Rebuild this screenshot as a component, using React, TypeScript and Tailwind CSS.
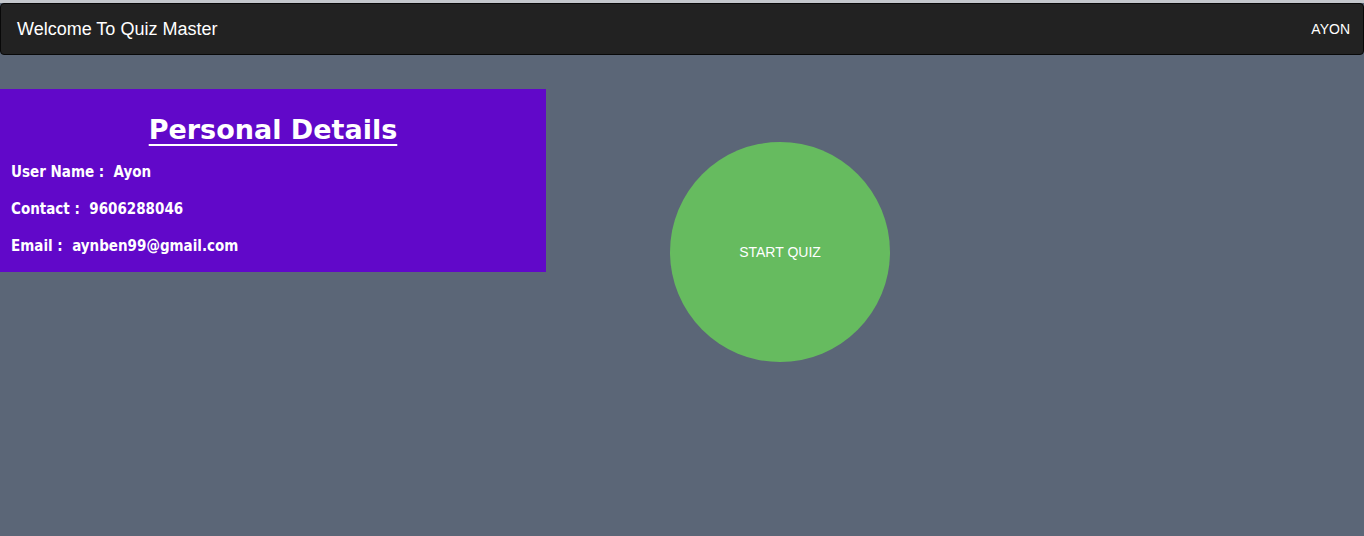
export default function App() {
  const details = [
    { label: 'User Name', value: 'Ayon' },
    { label: 'Contact', value: '9606288046' },
    { label: 'Email', value: 'aynben99@gmail.com' }
  ];

  return (
    <div className="h-[536px] w-full overflow-hidden bg-[#5b6677]">
      <div className="h-[3px] bg-[#c4c7cc]" />
      <nav className="flex h-[52px] items-center justify-between rounded-[4px] border border-[#080808] bg-[#222222] pl-4 pr-[13px] font-['Liberation_Sans',Arial,sans-serif] text-white">
        <span className="text-[18px]">Welcome To Quiz Master</span>
        <span className="text-[14px]">AYON</span>
      </nav>

      <main className="mt-[34px] flex items-start">
        <section className="h-[183px] w-[546px] bg-[#6108c9] px-[11px] pt-[21px] font-['DejaVu_Sans_Condensed','DejaVu_Sans',sans-serif] font-bold text-white">
          <h1 className="text-center font-['DejaVu_Sans',sans-serif] text-[27px] leading-[40px] underline underline-offset-[5px] decoration-2">
            Personal Details
          </h1>
          <ul className="mt-[12px] flex flex-col gap-[17px] text-[15px] leading-[20px]">
            {details.map(item => (
              <li key={item.label} className="whitespace-pre">
                {item.label} :  {item.value}
              </li>
            ))}
          </ul>
        </section>

        <button className="ml-[124px] mt-[53px] flex h-[220px] w-[220px] items-center justify-center rounded-full bg-[#66bb5f] font-['Liberation_Sans',Arial,sans-serif] text-[14px] text-white">
          START QUIZ
        </button>
      </main>
    </div>
  );
}
